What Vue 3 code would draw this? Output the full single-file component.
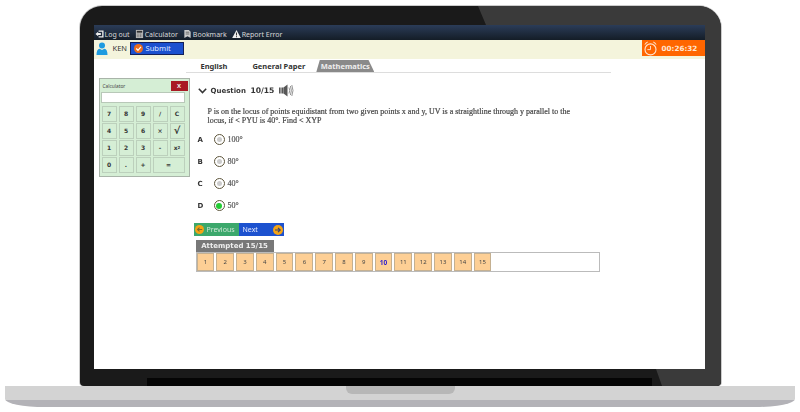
<template>
  <div class="page">
    <div class="lid">
      <svg class="lid-art" width="641" height="380" viewBox="0 0 641 380">
        <path d="M398 0 L619 0 Q641 0 641 22 L641 376 Q641 380 637 380 L582 380 L576 363 L625 363 L625 19 L406 19 Z" fill="#3a3a3a" />
        <rect x="67" y="372" width="505" height="8" fill="#050505" />
      </svg>
      <div class="screen">
        <div class="topbar">
          <span v-for="link in links" :key="link.label" class="top-link">
            <svg width="9" height="10" viewBox="0 0 10 10" v-html="link.icon"></svg>
            {{ link.label }}
          </span>
        </div>
        <div class="userbar">
          <svg class="avatar" width="12" height="13" viewBox="0 0 12 13">
            <circle cx="6" cy="3.4" r="3" fill="#1e9be0" />
            <path d="M0.5 13 Q0.5 7.2 3.6 6.8 L6 8 L8.4 6.8 Q11.5 7.2 11.5 13 Z" fill="#1e9be0" />
          </svg>
          <span class="username">KEN</span>
          <button class="submit">
            <svg width="9" height="9" viewBox="0 0 10 10">
              <circle cx="5" cy="5" r="5" fill="#ec6d1c" />
              <path d="M2.5 5 L4.4 7 L7.7 3.2" stroke="#fff" stroke-width="1.4" fill="none" />
            </svg>
            <span class="submit-label">Submit</span>
          </button>
          <div class="timer">
            <svg width="13" height="15" viewBox="0 0 13 15" fill="none" stroke="#ffe6d2">
              <circle cx="6.5" cy="8.4" r="5.5" stroke-width="1.1" />
              <path d="M6.5 5 V8.6 H3.4" stroke-width="0.9" />
              <path d="M0.8 3.6 Q1.4 1.2 3.8 1 Z M12.2 3.6 Q11.6 1.2 9.2 1 Z" fill="#ffe6d2" stroke-width="0.5" />
            </svg>
            <span>00:26:32</span>
          </div>
        </div>
        <div class="tabs">
          <span v-for="tab in tabs" :key="tab" class="tab" :class="{ active: tab === 'Mathematics' }">{{ tab }}</span>
        </div>
        <div class="content">
          <div class="calculator">
            <div class="calc-head">
              <span>Calculator</span>
              <span class="calc-close">X</span>
            </div>
            <div class="calc-display"></div>
            <div class="calc-keys">
              <span v-for="key in keys" :key="key" class="calc-key" :class="{ wide: key === '=', big: key === '√' }">
                <template v-if="key === 'x2'">x<sup>2</sup></template>
                <template v-else>{{ key }}</template>
              </span>
            </div>
          </div>
          <div class="question">
            <div class="q-head">
              <svg width="9" height="6" viewBox="0 0 9 6"><path d="M0.8 0.8 L4.5 4.6 L8.2 0.8" stroke="#333" stroke-width="1.5" fill="none" /></svg>
              <span class="q-label">Question</span>
              <span class="q-count">10/15</span>
              <svg width="15" height="13" viewBox="0 0 15 13">
                <rect x="0" y="3.5" width="1.6" height="6" fill="#555" />
                <rect x="2.4" y="3.5" width="2" height="6" fill="#555" />
                <path d="M4.5 3.5 L8.5 0.5 V12.5 L4.5 9.5 Z" fill="#555" />
                <path d="M10 3.5 Q11.4 6.5 10 9.5 M11.4 2 Q13.4 6.5 11.4 11 M12.8 1 Q15.2 6.5 12.8 12" stroke="#777" stroke-width="0.8" fill="none" />
              </svg>
            </div>
            <p class="q-text">P is on the locus of points equidistant from two given points x and y, UV is a straightline through y parallel to the<br />locus, if &lt; PYU is 40&#176;. Find &lt; XYP</p>
            <div v-for="opt in options" :key="opt.letter" class="option">
              <span class="opt-letter">{{ opt.letter }}</span>
              <span class="radio" :class="{ checked: opt.letter === 'D' }"><i></i></span>
              <span class="opt-text">{{ opt.text }}</span>
            </div>
            <div class="nav">
              <button class="nav-btn prev">
                <svg width="9" height="9" viewBox="0 0 10 10"><circle cx="5" cy="5" r="5" fill="#f5a312" /><path d="M8 5 H3 M5 2.8 L2.8 5 L5 7.2" stroke="#7a6a2a" stroke-width="1.2" fill="none" /></svg>
                Previous
              </button>
              <button class="nav-btn next">
                Next
                <svg width="10" height="10" viewBox="0 0 10 10"><circle cx="5" cy="5" r="5" fill="#f5a312" /><path d="M2 5 H7 M5 2.8 L7.2 5 L5 7.2" stroke="#35406a" stroke-width="1.2" fill="none" /></svg>
              </button>
            </div>
            <div class="attempted">Attempted 15/15</div>
            <div class="palette">
              <span v-for="n in 15" :key="n" class="cell" :class="{ current: n === 10 }">{{ n }}</span>
            </div>
          </div>
        </div>
      </div>
    </div>
    <div class="base">
      <div class="notch"></div>
    </div>
  </div>
</template>

<script setup>
const links = [
  { label: 'Log out', icon: '<path d="M4 1 H9.5 V9 H4 V7.6 H8 V2.4 H4 Z" fill="#eee"/><path d="M0.5 5 L3.5 2.4 V4 H6.5 V6 H3.5 V7.6 Z" fill="#eee"/>' },
  { label: 'Calculator', icon: '<rect x="1" y="0.5" width="8" height="9" fill="#bbb"/><rect x="2" y="1.5" width="6" height="2" fill="#333"/><path d="M2 5 H8 M2 6.5 H8 M2 8 H8" stroke="#444" stroke-width="0.7" stroke-dasharray="1 0.8"/>' },
  { label: 'Bookmark', icon: '<path d="M1.5 0.5 H6.5 L8.5 2.5 V9.5 L5 7.6 L1.5 9.5 Z" fill="#ccc"/><path d="M3 3 H7 M3 5 H7" stroke="#333" stroke-width="0.7"/>' },
  { label: 'Report Error', icon: '<path d="M5 0.5 L9.8 9.5 H0.2 Z" fill="#eee"/><path d="M5 3.4 V6.6 M5 7.4 V8.6" stroke="#222" stroke-width="1"/>' }
]

const tabs = ['English', 'General Paper', 'Mathematics']

const keys = ['7', '8', '9', '/', 'C', '4', '5', '6', '×', '√', '1', '2', '3', '-', 'x2', '0', '.', '+', '=']

const options = [
  { letter: 'A', text: '100°' },
  { letter: 'B', text: '80°' },
  { letter: 'C', text: '40°' },
  { letter: 'D', text: '50°' }
]
</script>

<style>
html, body {
  margin: 0;
  background: #fff;
}
</style>

<style scoped>
.page {
  width: 800px;
  height: 412px;
  padding-top: 6px;
  box-sizing: border-box;
  display: flex;
  flex-direction: column;
  align-items: center;
  overflow: hidden;
  font-family: "Noto Sans", "DejaVu Sans", sans-serif;
}

.lid {
  position: relative;
  width: 641px;
  height: 380px;
  box-sizing: border-box;
  padding: 19px 16px 17px 14px;
  background: #1a1a1a;
  border-radius: 22px 22px 4px 4px;
  box-shadow: 0 -1px 0 #ccc, 1px 0 0 #ccc, -1px 0 0 #ccc;
}

.lid-art {
  position: absolute;
  left: 0;
  top: 0;
  border-radius: 22px 22px 4px 4px;
}

.screen {
  position: relative;
  width: 611px;
  height: 344px;
  background: #fff;
  display: flex;
  flex-direction: column;
}

.topbar {
  height: 15px;
  box-sizing: border-box;
  padding: 3px 0 0 1px;
  background: linear-gradient(#2b3c58, #141d27);
  display: flex;
  align-items: center;
  gap: 5px;
  font-size: 7px;
  color: #d8d8d8;
}

.top-link {
  display: flex;
  align-items: center;
  gap: 1px;
}

.userbar {
  height: 19px;
  background: #f4f4dc;
  display: flex;
  align-items: flex-start;
  font-size: 7.5px;
  color: #333;
}

.avatar {
  margin: 2px 0 0 2px;
}

.username {
  margin: 3px 0 0 5px;
  width: 17px;
}

.submit {
  margin-top: 2px;
  width: 54px;
  height: 13px;
  padding: 0 0 0 3px;
  background: #1b50cf;
  border: 1px solid #14205a;
  color: #dfe6ff;
  font: 7.6px "Noto Sans", sans-serif;
  display: flex;
  align-items: center;
  gap: 3px;
}

.submit-label {
  margin-top: -2px;
}

.timer {
  margin-left: auto;
  width: 63px;
  height: 16px;
  box-sizing: border-box;
  padding-left: 2px;
  background: #ff6600;
  color: #ffe6d2;
  display: flex;
  align-items: center;
  gap: 5px;
  font-family: "DejaVu Sans", sans-serif;
  font-weight: bold;
  font-size: 7.2px;
}

.tabs {
  width: 425px;
  height: 14px;
  margin-left: 92px;
  padding-left: 15px;
  box-sizing: border-box;
  border-bottom: 1px solid #ddd;
  display: flex;
  align-items: flex-end;
  font-size: 7.5px;
  font-weight: bold;
  color: #333;
  gap: 25px;
}

.tab {
  line-height: 11px;
  padding-top: 1px;
}

.tab.active {
  margin-left: -14px;
  width: 58px;
  text-align: center;
  color: #eee;
  background: #8a8a8a;
  clip-path: polygon(6% 0, 90% 0, 100% 100%, 0 100%);
}

.content {
  flex: 1;
  display: flex;
  align-items: flex-start;
  opacity: 0.99;
}

.calculator {
  width: 91px;
  height: 99px;
  box-sizing: border-box;
  margin: 5px 0 0 5px;
  padding: 1px;
  background: #d5eed5;
  border: 1px solid #a8b4a8;
}

.calc-head {
  height: 11px;
  display: flex;
  justify-content: space-between;
  align-items: center;
  padding-left: 2px;
  font-size: 4.8px;
  color: #444;
}

.calc-close {
  width: 17px;
  height: 10px;
  background: #a81822;
  color: #eee;
  font-size: 6px;
  font-weight: bold;
  line-height: 10px;
  text-align: center;
}

.calc-display {
  width: 84px;
  height: 11px;
  margin: 1px 0 3px;
  background: #fff;
  border: 1px solid #b8c8b8;
  box-sizing: border-box;
}

.calc-keys {
  display: grid;
  grid-template-columns: repeat(5, 15px);
  grid-auto-rows: 15.5px;
  gap: 1.5px 2px;
  margin-left: 1px;
}

.calc-key {
  display: flex;
  align-items: center;
  justify-content: center;
  border: 1px solid #bcd0bc;
  box-sizing: border-box;
  font-family: "DejaVu Sans", sans-serif;
  font-size: 6px;
  font-weight: bold;
  color: #333;
}

.calc-key.big {
  font-size: 10px;
}

.calc-key sup {
  font-size: 4px;
  line-height: 0;
}

.calc-key.wide {
  grid-column: span 2;
}

.question {
  margin-left: 4px;
  flex: 1;
}

.q-head {
  height: 13px;
  margin-top: 11px;
  padding-left: 4px;
  display: flex;
  align-items: center;
  font-family: "DejaVu Sans", sans-serif;
  font-size: 7px;
  font-weight: bold;
  color: #333;
}

.q-label {
  margin-left: 4px;
  width: 40px;
}

.q-count {
  width: 28px;
  font-size: 7.6px;
}

.q-text {
  margin: 10px 0 0 14px;
  font-family: "Liberation Serif", serif;
  font-size: 8px;
  line-height: 9px;
  color: #444;
  -webkit-text-stroke: 0.2px #444;
  white-space: nowrap;
}

.option {
  height: 22px;
  display: flex;
  align-items: center;
  padding-left: 4px;
  font-size: 7px;
  color: #333;
}

.q-text + .option {
  margin-top: 3.5px;
}

.opt-letter {
  width: 16px;
  font-family: "DejaVu Sans", sans-serif;
  font-weight: bold;
}

.radio {
  width: 11px;
  height: 11px;
  box-sizing: border-box;
  border: 1.5px solid #5a5238;
  border-radius: 50%;
  display: flex;
  align-items: center;
  justify-content: center;
}

.radio i {
  width: 5px;
  height: 5px;
  border-radius: 50%;
  background: #ccc;
}

.radio.checked i {
  width: 6px;
  height: 6px;
  background: #22cc33;
}

.opt-text {
  margin-left: 3px;
  font-family: "Liberation Serif", serif;
  font-size: 8px;
  color: #555;
  -webkit-text-stroke: 0.2px #555;
}

.nav {
  display: flex;
  margin-top: 6.5px;
}

.nav-btn {
  height: 13px;
  width: 45px;
  padding: 0 1px;
  border: 0;
  display: flex;
  align-items: center;
  gap: 3px;
  font: 7px "Noto Sans", sans-serif;
}

.prev {
  background: #3aa76b;
  color: #cfe8d8;
}

.next {
  background: #1b50cf;
  color: #e3e9ff;
  padding-left: 4px;
  justify-content: space-between;
}

.attempted {
  width: 78px;
  height: 12px;
  margin: 4px 0 0 2px;
  background: #777;
  color: #eee;
  font-family: "DejaVu Sans", sans-serif;
  font-size: 7px;
  font-weight: bold;
  line-height: 12px;
  text-align: center;
}

.palette {
  width: 404px;
  height: 20px;
  box-sizing: border-box;
  margin-left: 2px;
  border: 1px solid #bbb;
  display: flex;
  gap: 2px;
}

.cell {
  width: 17.8px;
  height: 18px;
  box-sizing: border-box;
  background: #fdcf94;
  border: 1px solid #c4b090;
  font-size: 6px;
  color: #444;
  display: flex;
  align-items: center;
  justify-content: center;
}

.cell.current {
  color: #2a1ad0;
  font-weight: bold;
  font-size: 6.5px;
}

.base {
  position: relative;
  width: 790px;
  height: 21px;
  background: linear-gradient(#d3d3d3 14px, #b3b2b7 14px);
  border-radius: 0 0 40px 40px / 0 0 8px 8px;
}

.notch {
  width: 109px;
  height: 8px;
  margin-left: 341px;
  background: #b7b7b7;
  border-radius: 0 0 6px 6px;
}
</style>
